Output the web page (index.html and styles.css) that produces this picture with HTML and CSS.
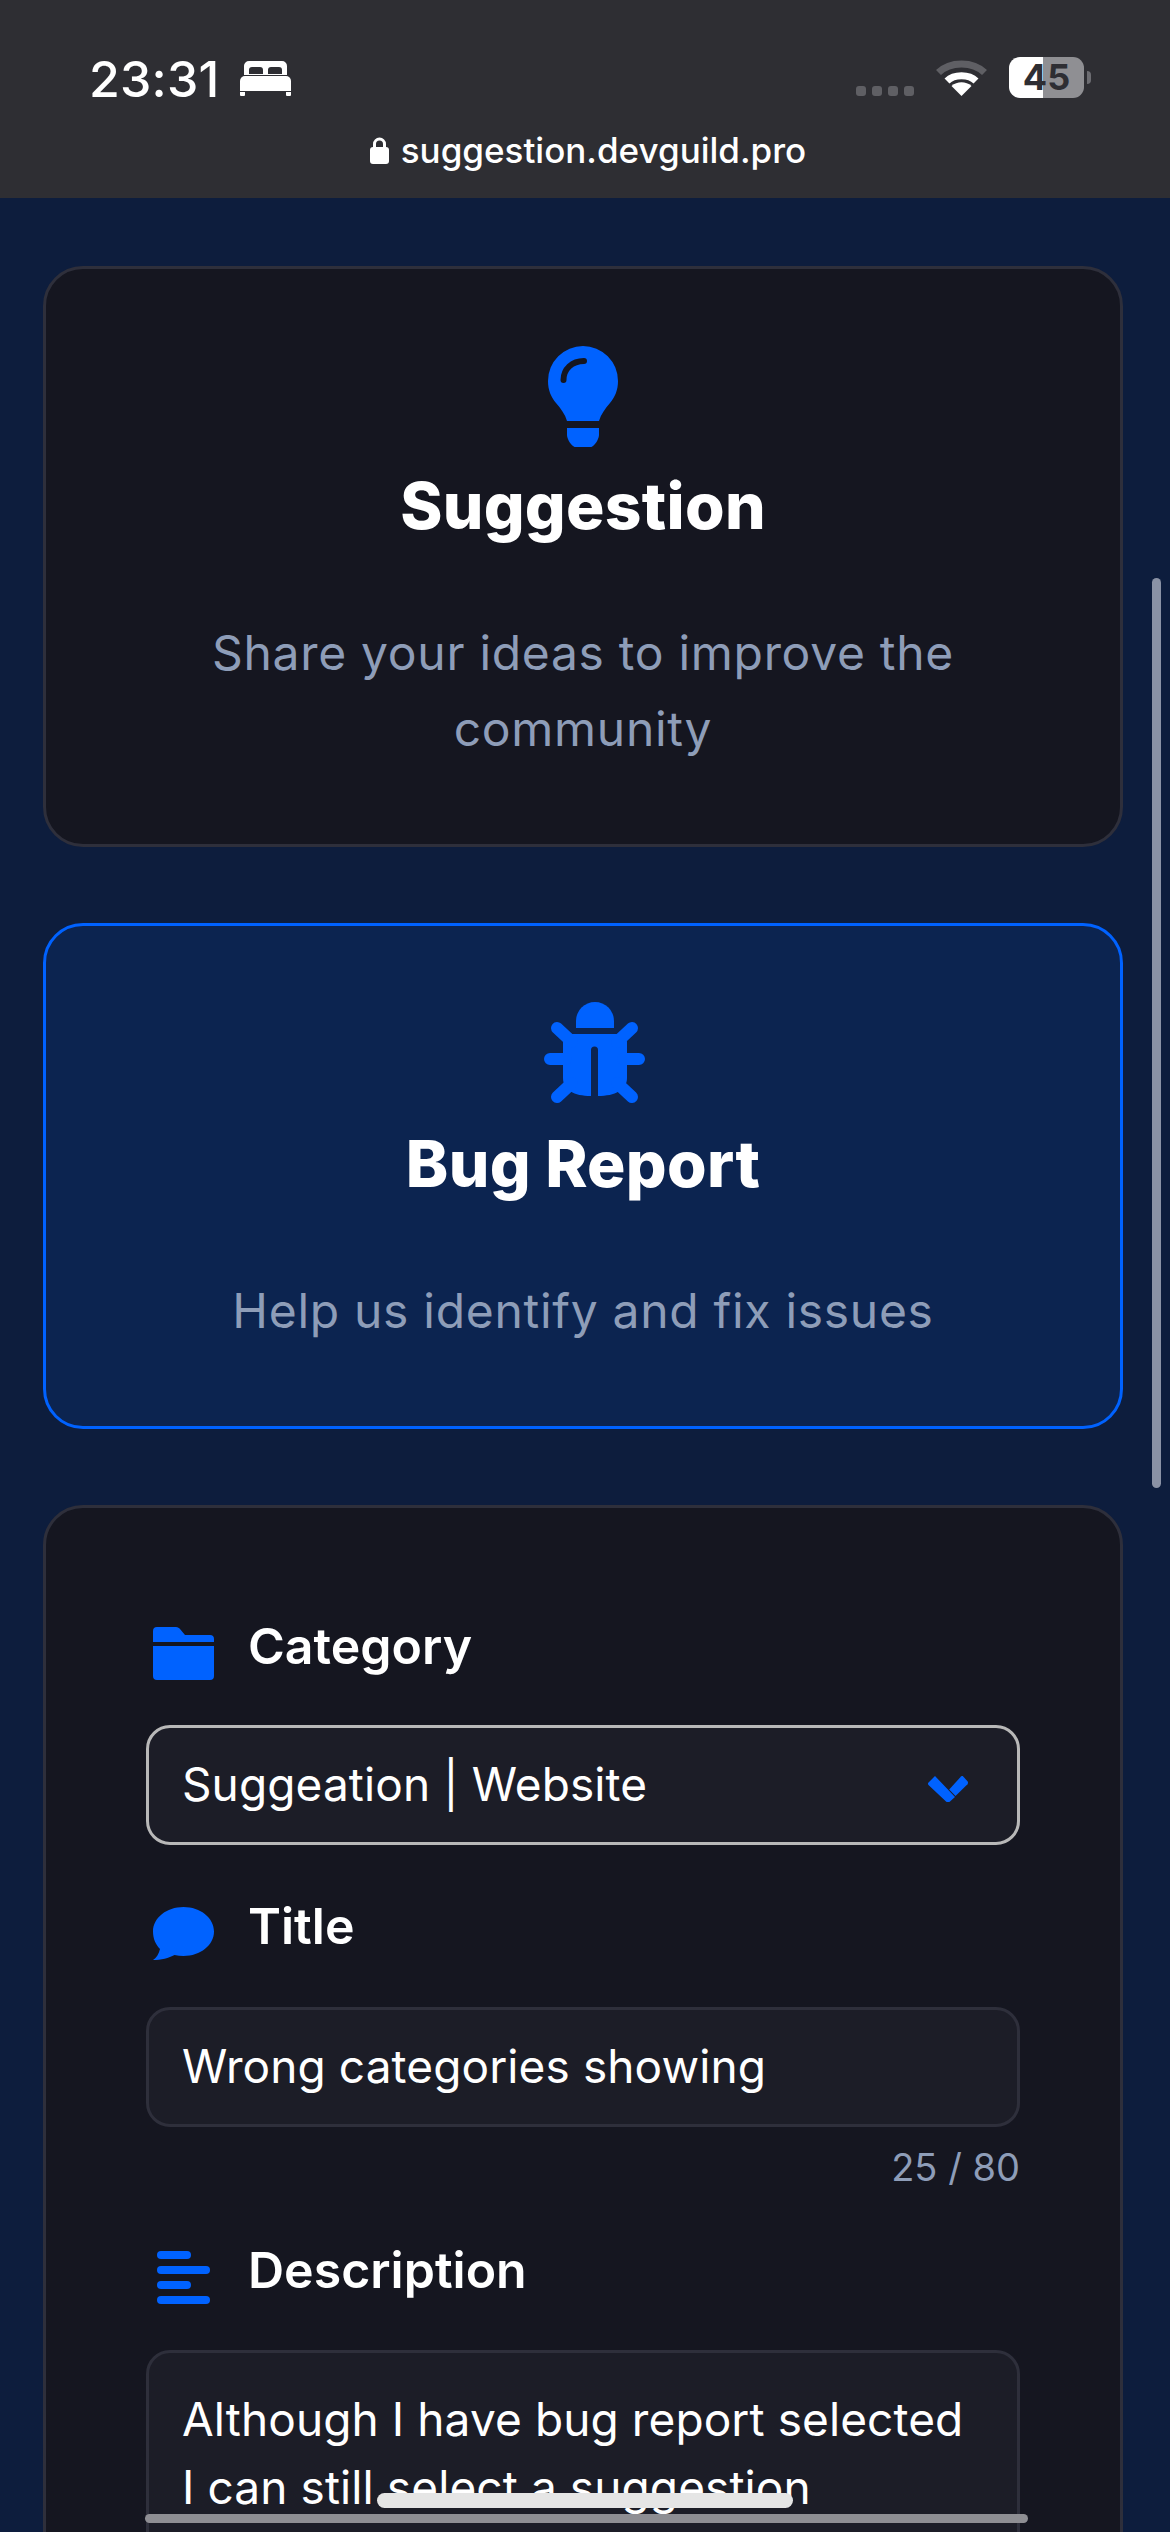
FILE: index.html
```html
<!DOCTYPE html>
<html lang="en">
<head>
<meta charset="utf-8">
<title>Suggestion</title>
<link rel="stylesheet" href="styles.css">
</head>
<body>
<header class="browser-bar">
  <div class="status-row">
    <div class="status-left">
      <span class="clock">23:31</span>
      <svg class="bed" viewBox="0 0 51 35"><path fill="#fff" fill-rule="evenodd" d="M9 0h33a5 5 0 0 1 5 5v9H4V5a5 5 0 0 1 5-5zM9 13h14V9a3 3 0 0 0-3-3h-8a3 3 0 0 0-3 3zM28 13h14V9a3 3 0 0 0-3-3h-8a3 3 0 0 0-3 3z"/><path fill="#fff" d="M5 15h41a5 5 0 0 1 5 5v10H0V20a5 5 0 0 1 5-5z"/><path fill="#fff" d="M0 31h5v3a1 1 0 0 1-1 1H1a1 1 0 0 1-1-1zM46 31h5v3a1 1 0 0 1-1 1h-3a1 1 0 0 1-1-1z"/></svg>
    </div>
    <div class="status-right">
      <div class="signal"><i></i><i></i><i></i><i></i></div>
      <svg class="wifi" viewBox="0 0 51 37">
        <path fill="none" stroke="#5f5f64" stroke-width="7" d="M2.500 13.500C14 2 37 2 48.500 13.500"/>
        <path fill="none" stroke="#fff" stroke-width="7" d="M11 22C18 15 33 15 40 22"/>
        <path fill="#fff" d="M25.500 37L15.500 27C21 22 30 22 35.500 27z"/>
      </svg>
      <div class="battery"><span class="battery-level">45</span></div>
    </div>
  </div>
  <div class="url-row">
    <svg class="lock" viewBox="0 0 19 27"><path fill="none" stroke="#fff" stroke-width="3" d="M4.500 12V7a5 5 0 0 1 10 0v5"/><rect y="10" width="19" height="17" rx="3" fill="#fff"/></svg>
    <span class="url">suggestion.devguild.pro</span>
  </div>
</header>

<main class="page">
  <section class="type-card">
    <svg class="type-icon bulb" viewBox="0 0 70 101">
      <path fill="#0062ff" d="M35 0a35 35 0 0 1 35 35c0 9-3 16-8 22-5 6-9 11-11 18H19c-2-7-6-12-11-18C3 51 0 44 0 35A35 35 0 0 1 35 0z"/>
      <path fill="none" stroke="#151620" stroke-width="6" stroke-linecap="round" d="M36 15C24 15 15.500 23 15.500 34"/>
      <path fill="#0062ff" d="M19 82h32v7c0 3-3 9-6 11-1 1-2 1-4 1H29c-2 0-3 0-4-1-3-2-6-8-6-11z"/>
    </svg>
    <h2 class="type-title">Suggestion</h2>
    <p class="type-text">Share your ideas to improve the community</p>
  </section>

  <section class="type-card type-card-active">
    <svg class="type-icon bug" viewBox="0 0 101 101">
      <path fill="#0062ff" d="M32 26v-7a19 19 0 0 1 38 0v7z"/>
      <path fill="#0062ff" d="M27 32h48a8 8 0 0 1 8 8v36c0 12-12 18-29 18V48a3.500 3.500 0 0 0-7 0v46c-17 0-28-6-28-18V40a8 8 0 0 1 8-8z"/>
      <path fill="none" stroke="#0062ff" stroke-width="12" stroke-linecap="round" d="M13 26l15 14M88 26L73 40M6 57h16M95 57H79M13 95l15-14M88 95L73 81"/>
    </svg>
    <h2 class="type-title">Bug Report</h2>
    <p class="type-text">Help us identify and fix issues</p>
  </section>

  <section class="form-card">
    <div class="field">
      <div class="field-label field-label-tight">
        <span class="label-icon">
          <svg class="folder" viewBox="0 0 61 53"><path fill="#0062ff" d="M4 0h19c2 0 3 1 4 2l5 6h25a4 4 0 0 1 4 4v3H0V4a4 4 0 0 1 4-4zM0 19h61v30a4 4 0 0 1-4 4H4a4 4 0 0 1-4-4z"/></svg>
        </span>
        <span class="label-text">Category</span>
      </div>
      <div class="control control-select">
        <span>Suggeation | Website</span>
        <svg class="chevron" viewBox="0 0 40 26"><path fill="#0062ff" d="M7 0l20 21-5 4.500c-1 1-3 1-4 0L.5 9c-.7-1-.7-1.800 0-2.500L6 1z"/><path fill="#0062ff" d="M33 .5c1-.6 1.600-.6 2.200 0l4.300 4.800c.7.900.7 2 0 3L27.500 20l-6.300-6.500z"/></svg>
      </div>
    </div>

    <div class="field">
      <div class="field-label">
        <span class="label-icon">
          <svg class="chat" viewBox="0 0 61 53"><path fill="#0062ff" d="M30.500 0C47.500 0 61 11 61 24.500S47.500 49 30.500 49c-3 0-6-.4-9-1C16 51 8 53 0 53c3-2 6-6 7-11C2.500 37.500 0 31.500 0 24.500 0 11 13.500 0 30.500 0z"/></svg>
        </span>
        <span class="label-text">Title</span>
      </div>
      <div class="control">Wrong categories showing</div>
      <div class="counter">25 / 80</div>
    </div>

    <div class="field">
      <div class="field-label field-label-mid">
        <span class="label-icon">
          <span class="lines"><i class="short"></i><i></i><i class="short"></i><i></i></span>
        </span>
        <span class="label-text">Description</span>
      </div>
      <div class="control control-area">Although I have bug report selected I can still select a suggestion</div>
    </div>
  </section>
</main>

<div class="scroll-v"></div>
<div class="scroll-h"></div>
<div class="home-bar"></div>
</body>
</html>
```
FILE: styles.css
```css
* { box-sizing: border-box; }
html, body { margin: 0; padding: 0; }
body {
  position: relative;
  width: 1170px;
  height: 2532px;
  overflow: hidden;
  background: #0d1d3d;
  font-family: Inter, "Liberation Sans", sans-serif;
  color: #fff;
}

/* browser chrome */
.browser-bar {
  height: 198px;
  background: #2e2e33;
  padding: 57px 86px 0 89px;
}
.status-row {
  display: flex;
  justify-content: space-between;
  height: 41px;
}
.status-left { display: flex; align-items: flex-start; gap: 21px; }
.clock { font-size: 50px; line-height: 44px; font-weight: 500; letter-spacing: 0.2px; }
.bed { width: 51px; height: 35px; margin-top: 4px; }
.status-right { display: flex; align-items: flex-start; }
.signal { display: flex; gap: 6px; margin-top: 29px; margin-right: 22px; }
.signal i { width: 10px; height: 10px; border-radius: 3px; background: #5f5f64; }
.wifi { width: 51px; height: 37px; margin-top: 2px; margin-right: 22px; }
.battery {
  position: relative;
  width: 75px;
  height: 41px;
  border-radius: 11px;
  background: linear-gradient(90deg, #fff 0 34px, #8f8f93 34px);
  color: #2e2e33;
  font-size: 36px;
  line-height: 41px;
  font-weight: 700;
  text-align: center;
}
.battery::after {
  content: "";
  position: absolute;
  left: 78px;
  top: 14px;
  width: 4px;
  height: 13px;
  border-radius: 0 5px 5px 0;
  background: #6d6d72;
}
.url-row {
  display: flex;
  justify-content: center;
  align-items: center;
  gap: 12px;
  margin-top: 30px;
  padding-left: 3px;
}
.lock { width: 19px; height: 27px; }
.url { font-size: 35px; line-height: 44px; font-weight: 500; }

/* page */
.page {
  display: flex;
  flex-direction: column;
  gap: 76px;
  padding: 68px 47px 0 43px;
}
.type-card {
  display: flex;
  flex-direction: column;
  align-items: center;
  padding: 77px 80px 77px;
  border: 3px solid #2e2f3b;
  border-radius: 40px;
  background: #151620;
  text-align: center;
}
.type-card-active {
  border-color: #0062ff;
  background: #0c2450;
}
.type-icon { display: block; }
.bulb { width: 70px; height: 101px; }
.bug { width: 101px; height: 101px; margin: -1px 0 2px 22px; }
.type-title {
  margin: 20px 0 0;
  font-size: 64px;
  line-height: 77px;
  font-weight: 800;
  letter-spacing: 0.3px;
}
.type-text {
  margin: 71px 0 0;
  font-size: 48px;
  line-height: 76px;
  font-weight: 400;
  letter-spacing: 0.7px;
  color: #8e9db8;
}

/* form */
.form-card {
  padding: 119px 100px 100px;
  border: 3px solid #2e2f3b;
  border-radius: 40px;
  background: #151620;
}
.field { margin-bottom: 62px; }
.field-label {
  display: flex;
  align-items: flex-start;
  height: 53px;
  margin-bottom: 47px;
}
.field-label-tight { margin-bottom: 45px; }
.field-label-mid { margin-bottom: 46px; }
.label-icon {
  display: flex;
  justify-content: center;
  width: 75px;
  margin-right: 27px;
}
.label-text { margin-top: 1px; font-size: 50px; line-height: 36px; font-weight: 600; }
.folder, .chat { width: 61px; height: 53px; }
.lines {
  display: flex;
  flex-direction: column;
  gap: 7.500px;
  width: 53px;
}
.lines i {
  display: block;
  width: 53px;
  height: 7.500px;
  border-radius: 4px;
  background: #0062ff;
}
.lines i.short { width: 34px; }

.control {
  padding: 31px 33px 0;
  height: 120px;
  border: 3px solid #2e2f3b;
  border-radius: 24px;
  background: #1c1d27;
  font-size: 46px;
  line-height: 50px;
  letter-spacing: 0.1px;
}
.control-select {
  display: flex;
  justify-content: space-between;
  align-items: flex-start;
  border-color: #b8b8b8;
  padding-right: 49px;
}
.chevron { width: 40px; height: 26px; margin-top: 17px; }
.control-area {
  height: 400px;
  padding-top: 32px;
  line-height: 68px;
}
.counter {
  margin-top: 18px;
  font-size: 38px;
  line-height: 44px;
  text-align: right;
  color: #8e9db8;
}

/* overlays */
.scroll-v {
  position: absolute;
  left: 1152px;
  top: 578px;
  width: 9px;
  height: 910px;
  border-radius: 5px;
  background: #8a92a5;
}
.scroll-h {
  position: absolute;
  left: 145px;
  top: 2514px;
  width: 883px;
  height: 9px;
  border-radius: 5px;
  background: #8e8e93;
}
.home-bar {
  position: absolute;
  left: 377px;
  top: 2493px;
  width: 416px;
  height: 15px;
  border-radius: 8px;
  background: #e5e5e5;
}
```
